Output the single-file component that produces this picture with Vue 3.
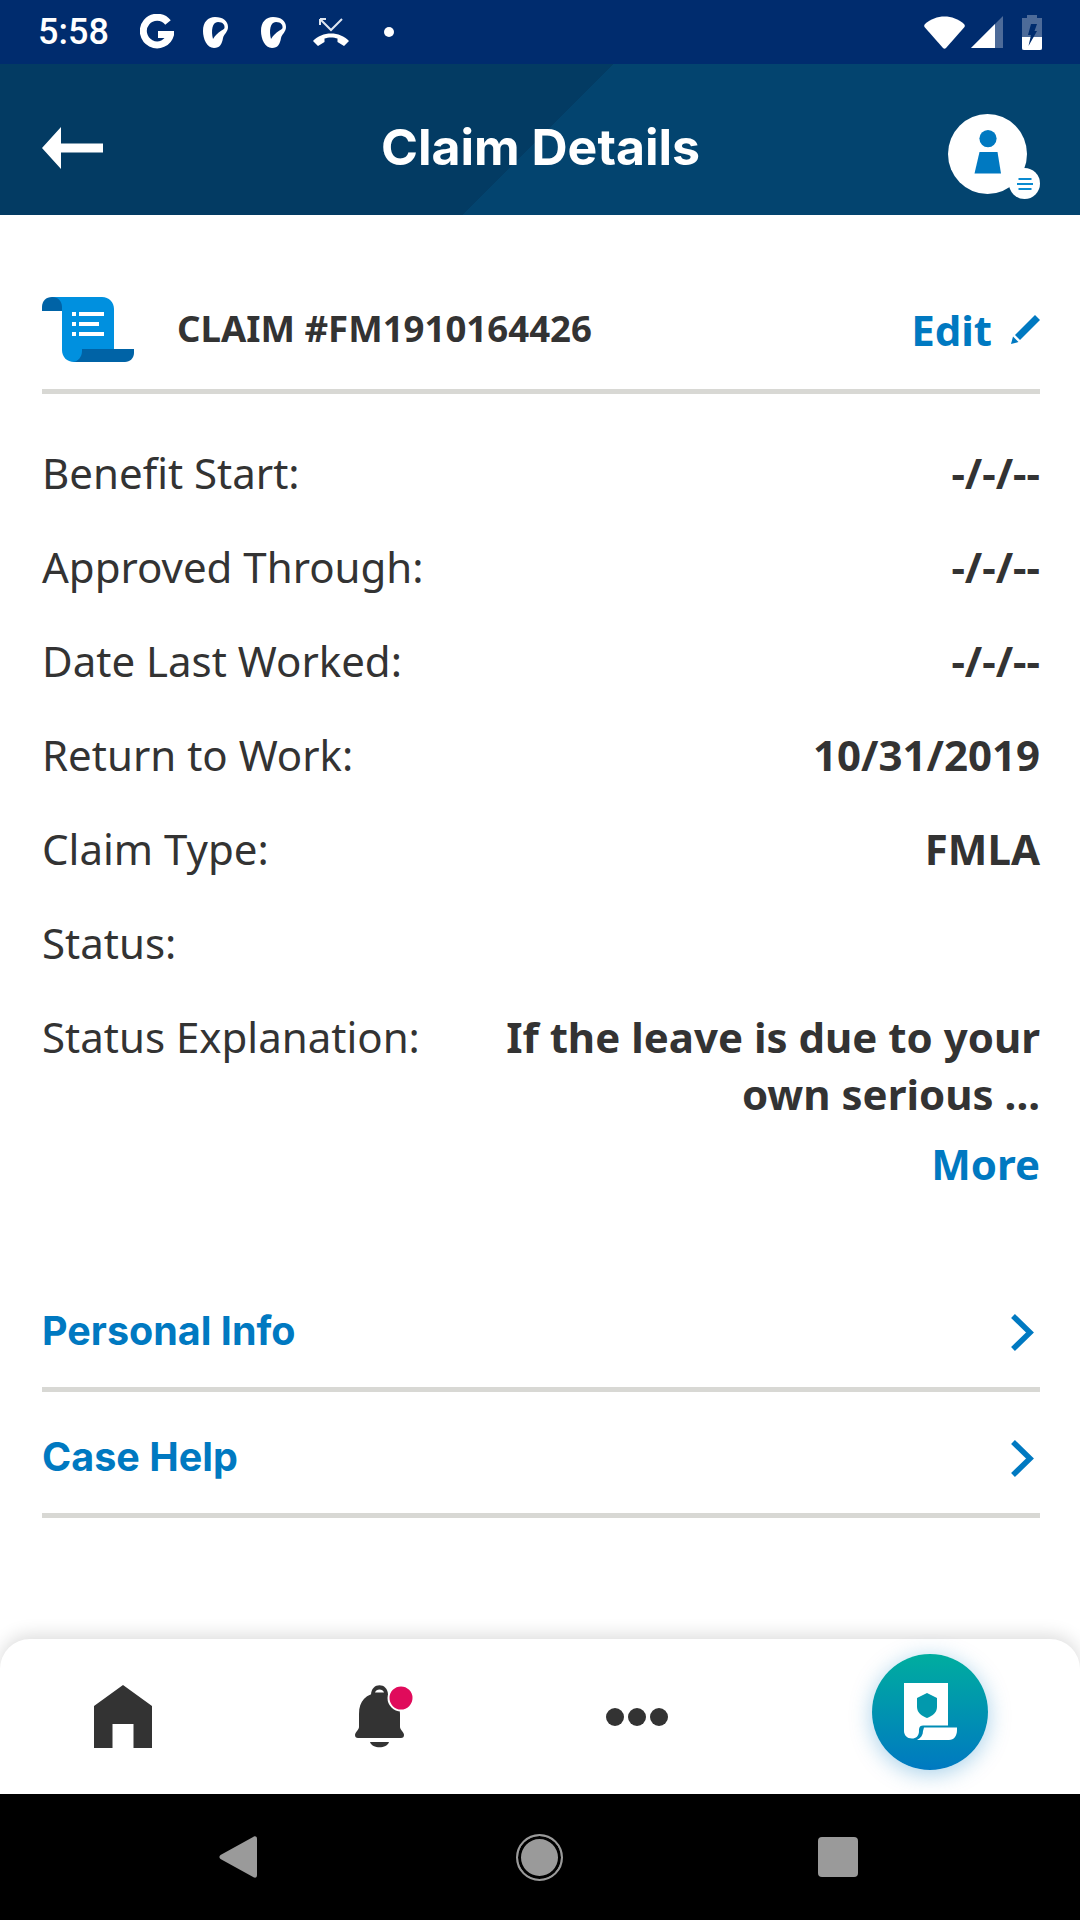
<script setup>
const rows = [
  { label: 'Benefit Start:', value: '-/-/--' },
  { label: 'Approved Through:', value: '-/-/--' },
  { label: 'Date Last Worked:', value: '-/-/--' },
  { label: 'Return to Work:', value: '10/31/2019' },
  { label: 'Claim Type:', value: 'FMLA' },
  { label: 'Status:', value: '' },
];

const links = ['Personal Info', 'Case Help'];
</script>

<template>
  <div class="screen">
    <div class="status-bar">
      <span class="time">5:58</span>
      <svg class="g-icon" width="34" height="36" viewBox="0 0 34 36">
        <path d="M28 8.500A13.800 13.800 0 1 0 30.500 20.500H18" fill="none" stroke="#fff" stroke-width="7" />
      </svg>
      <svg class="ear-one" width="25" height="31" viewBox="0 0 25 31">
        <path d="M12 0C20 0 25 4 25 10C25 15 21 17 20 21C19 27 17 31 11 31C4 31 0 22 0 14C0 5 5 0 12 0Z" fill="#fff" />
        <path d="M10 22C8 14 9 5 15 5C20 5 22 8 21.500 11C21 13 15 14 10 22Z" fill="#002c6e" />
      </svg>
      <svg class="ear-two" width="25" height="31" viewBox="0 0 25 31">
        <path d="M12 0C20 0 25 4 25 10C25 15 21 17 20 21C19 27 17 31 11 31C4 31 0 22 0 14C0 5 5 0 12 0Z" fill="#fff" />
        <path d="M10 22C8 14 9 5 15 5C20 5 22 8 21.500 11C21 13 15 14 10 22Z" fill="#002c6e" />
      </svg>
      <svg class="missed" width="38" height="30" viewBox="0 0 38 30">
        <path d="M8 2L19 13L30 2M8 2V8M8 2H14" fill="none" stroke="#dfe6f0" stroke-width="2" />
        <path d="M1 24C10 14 28 14 37 24L32 29L25.500 25V21.500C22 20 16 20 12.500 21.500V25L6 29Z" fill="#fff" />
      </svg>
      <span class="dot"></span>
      <span class="status-right">
        <svg width="41" height="33" viewBox="0 0 41 33">
          <path d="M1 8C12 -2 29 -2 40 8C41 9 41 10 40.500 11L22 32C21 33 20 33 19 32L0.500 11C0 10 0 9 1 8Z" fill="#fff" />
        </svg>
        <svg class="signal" width="32" height="32" viewBox="0 0 32 32">
          <path d="M0 32L32 0V32Z" fill="#fff" fill-opacity="0.3" />
          <path d="M0 32L24 8V32Z" fill="#fff" />
        </svg>
        <svg class="battery" width="20" height="35" viewBox="0 0 20 35">
          <path d="M5 0H15V3H20V35H0V3H5Z" fill="#fff" fill-opacity="0.3" />
          <path d="M0 22H20V33C20 34 19 35 18 35H2C1 35 0 34 0 33Z" fill="#fff" />
          <path d="M9 9H15L12.500 16H15L6.500 31L9 20H6Z" fill="#002c6e" />
        </svg>
      </span>
    </div>

    <header class="app-header">
      <svg class="back" width="61" height="42" viewBox="0 0 61 42">
        <path d="M0 21L19 0V16.500H61V25.500H19V42Z" fill="#fff" />
      </svg>
      <h1 class="title">Claim Details</h1>
      <span class="avatar">
        <svg class="person" width="28" height="44" viewBox="0 0 28 44">
          <circle cx="14" cy="8.600" r="8.600" fill="#0079c1" />
          <path d="M5.500 22H23.500L27 43.500H0.500Z" fill="#0079c1" />
        </svg>
        <span class="avatar-badge">
          <svg width="16" height="12" viewBox="0 0 16 12">
            <path d="M1.500 1H14.500M0 6H16M1.500 11H14.500" stroke="#0a8ad0" stroke-width="2" />
          </svg>
        </span>
      </span>
    </header>

    <main class="content">
      <div class="claim-head">
        <svg class="claim-icon" width="92" height="65" viewBox="0 0 92 65">
          <path d="M0 14V10C0 4 4 0 10 0H24C28 2 20 14 20 14Z" fill="#0063a6" />
          <path d="M10 0H60C67 0 72 5 72 12V56H40V65H32C25 65 20 60 20 53V10C20 4 16 0 10 0Z" fill="#0090df" />
          <path d="M40 52H92V56C92 61 88 65 83 65H30C36 65 40 60 40 54Z" fill="#0063a6" />
          <path d="M30 15H34V19H30ZM37 15H62V19H37ZM30 25H34V29H30ZM37 25H57V29H37ZM30 35H34V39H30ZM37 35H62V39H37Z" fill="#fff" />
        </svg>
        <span class="claim-number">CLAIM #FM1910164426</span>
        <span class="edit">
          Edit
          <svg width="29" height="29" viewBox="0 0 29 29">
            <path d="M24 0L29 5L9 25L4 20Z" fill="#0079c1" />
            <path d="M0 29L2 21.500L7.500 27Z" fill="#0079c1" />
          </svg>
        </span>
      </div>

      <div class="rows">
        <div v-for="row in rows" :key="row.label" class="row">
          <span>{{ row.label }}</span>
          <strong>{{ row.value }}</strong>
        </div>
        <div class="row">
          <span>Status Explanation:</span>
          <strong class="explain">If the leave is due to your<br />own serious ...</strong>
        </div>
      </div>
      <div class="more">More</div>

      <div class="links">
        <div v-for="link in links" :key="link" class="link">
          <span>{{ link }}</span>
          <svg width="24" height="37" viewBox="0 0 24 37">
            <path d="M3 2L20 18.500L3 35" fill="none" stroke="#0079c1" stroke-width="5.500" />
          </svg>
        </div>
      </div>
    </main>

    <nav class="tabs">
      <svg class="tab-home" width="58" height="63" viewBox="0 0 58 63">
        <path d="M0 21L29 0L58 21V63H39.500V39H18.500V63H0Z" fill="#333" />
      </svg>
      <svg class="tab-bell" width="60" height="64" viewBox="0 0 60 64">
        <path d="M16 10C16 -3 33 -3 33 10Z" fill="#333" />
        <path d="M20 7.500C21 3.500 28 3.500 29 7.500Z" fill="#fff" />
        <path d="M24.500 8C11 8 4 16 4 29V42C4 45 0 47 0 50C0 52 1 53 3 53H46C48 53 49 52 49 50C49 47 45 45 45 42V29C45 16 38 8 24.500 8Z" fill="#333" />
        <path d="M15 57H34C32 64 17 64 15 57Z" fill="#333" />
        <circle cx="46" cy="13" r="12.500" fill="#e00b5b" stroke="#fff" stroke-width="2" />
      </svg>
      <span class="tab-dots"><i></i><i></i><i></i></span>
      <span class="fab">
        <svg width="53" height="57" viewBox="0 0 53 57">
          <path d="M0 0H44V42.500H19C15 42.500 15 46 15 48C15 53 12 55.500 8 55.500C3 55.500 0 52 0 48Z" fill="#fff" />
          <path d="M20 44.500H53V47C53 53 50 57 45 57H13C17 55 19 52 19 48Z" fill="#fff" />
          <path d="M23 10L33 15V24C33 30 28 33 23 35C18 33 13 30 13 24V15Z" fill="#0299ad" />
        </svg>
      </span>
    </nav>

    <div class="nav-bar">
      <svg class="nav-back" width="38" height="42" viewBox="0 0 38 42">
        <path d="M35 0.500C37 0 38 1 38 3V39C38 41 37 42 35 41.500L1.500 23C0 22 0 20 1.500 19Z" fill="#9a9a9a" />
      </svg>
      <span class="nav-home"></span>
      <span class="nav-square"></span>
    </div>
  </div>
</template>

<style>
html,
body {
  margin: 0;
  background: #fff;
}
</style>

<style scoped>
.screen {
  display: flex;
  flex-direction: column;
  width: 1080px;
  height: 1920px;
  overflow: hidden;
  background: #fff;
  color: #333;
  font-family: "Noto Sans", sans-serif;
}

.status-bar {
  display: flex;
  align-items: center;
  height: 64px;
  padding: 0 38px 0 38px;
  box-sizing: border-box;
  background: #002c6e;
  flex: none;
}

.time {
  width: 70px;
  color: #fff;
  font-family: Roboto, sans-serif;
  font-size: 36px;
  font-weight: 500;
  line-height: 1;
}

.g-icon {
  margin-left: 32px;
}

.ear-one {
  margin-left: 29px;
}

.ear-two {
  margin-left: 33px;
}

.missed {
  margin-left: 26px;
}

.dot {
  width: 10px;
  height: 10px;
  margin-left: 34px;
  border-radius: 50%;
  background: #fff;
}

.status-right {
  display: flex;
  align-items: center;
  margin-left: auto;
}

.signal {
  margin-left: 6px;
}

.battery {
  margin-left: 19px;
}

.app-header {
  display: flex;
  align-items: center;
  box-sizing: border-box;
  height: 151px;
  padding: 14px 53px 0 42px;
  flex: none;
  background: linear-gradient(135deg, #033b63 49.8%, #03446f 49.8%);
}

.back {
  margin-top: 3px;
}

.title {
  flex: 1;
  margin: 0 0 0 30px;
  color: #fff;
  font-family: Inter, sans-serif;
  font-size: 50px;
  font-weight: 700;
  line-height: 1;
  text-align: center;
}

.avatar {
  position: relative;
  display: flex;
  align-items: center;
  justify-content: center;
  width: 79px;
  height: 80px;
  margin-top: 15px;
  border-radius: 50%;
  background: #fff;
}

.person {
  margin-top: -4px;
}

.avatar-badge {
  position: absolute;
  right: -13px;
  bottom: -5px;
  display: flex;
  align-items: center;
  justify-content: center;
  width: 31px;
  height: 31px;
  border-radius: 50%;
  background: #fff;
}

.content {
  flex: 1;
  padding: 0 40px 0 42px;
}

.claim-head {
  display: flex;
  align-items: center;
  margin-top: 82px;
  padding-bottom: 27px;
  border-bottom: 5px solid #d8d8d4;
}

.claim-number {
  margin-left: 43px;
  margin-top: -2px;
  font-size: 36.600px;
  font-weight: 700;
  line-height: 65px;
}

.edit {
  display: flex;
  align-items: center;
  gap: 19px;
  margin-left: auto;
  color: #0079c1;
  font-size: 42px;
  font-weight: 700;
  line-height: 65px;
}

.rows {
  display: flex;
  flex-direction: column;
  gap: 37px;
  margin-top: 50px;
}

.row {
  display: flex;
  justify-content: space-between;
  font-size: 42px;
  line-height: 57px;
}

.row strong {
  font-weight: 700;
  text-align: right;
}

.more {
  margin-top: 13px;
  color: #0079c1;
  font-size: 42px;
  font-weight: 700;
  line-height: 57px;
  text-align: right;
}

.links {
  margin-top: 74px;
}

.link {
  display: flex;
  align-items: center;
  justify-content: space-between;
  box-sizing: border-box;
  height: 126px;
  padding: 8px 6px 0 0;
  border-bottom: 5px solid #d8d8d4;
  color: #0079c1;
  font-family: Inter, sans-serif;
  font-size: 39.500px;
  font-weight: 700;
}

.link svg {
  margin-top: 4px;
}

.tabs {
  display: flex;
  align-items: center;
  height: 155px;
  padding-left: 94px;
  flex: none;
  border-radius: 30px 30px 0 0;
  background: #fff;
  box-shadow: 0 -4px 18px rgba(0, 0, 0, 0.14);
  position: relative;
}

.tab-bell {
  margin-left: 203px;
}

.tab-dots {
  display: flex;
  gap: 4px;
  margin-left: 191px;
}

.tab-dots i {
  width: 18px;
  height: 18px;
  border-radius: 50%;
  background: #333;
}

.fab {
  display: flex;
  align-items: center;
  justify-content: center;
  width: 116px;
  height: 116px;
  margin-top: -10px;
  margin-left: 204px;
  border-radius: 50%;
  background: linear-gradient(180deg, #00ad9f, #0079c1);
  box-shadow: 0 4px 22px rgba(0, 121, 193, 0.35);
}

.nav-bar {
  display: flex;
  align-items: center;
  height: 126px;
  padding-left: 219px;
  flex: none;
  background: #000;
  position: relative;
}

.nav-home {
  box-sizing: border-box;
  width: 47px;
  height: 47px;
  margin-left: 259px;
  border: 2px solid #9a9a9a;
  border-radius: 50%;
  background: #9a9a9a;
  box-shadow: inset 0 0 0 3px #000;
}

.nav-square {
  width: 40px;
  height: 40px;
  margin-left: 255px;
  border-radius: 4px;
  background: #9a9a9a;
}
</style>
